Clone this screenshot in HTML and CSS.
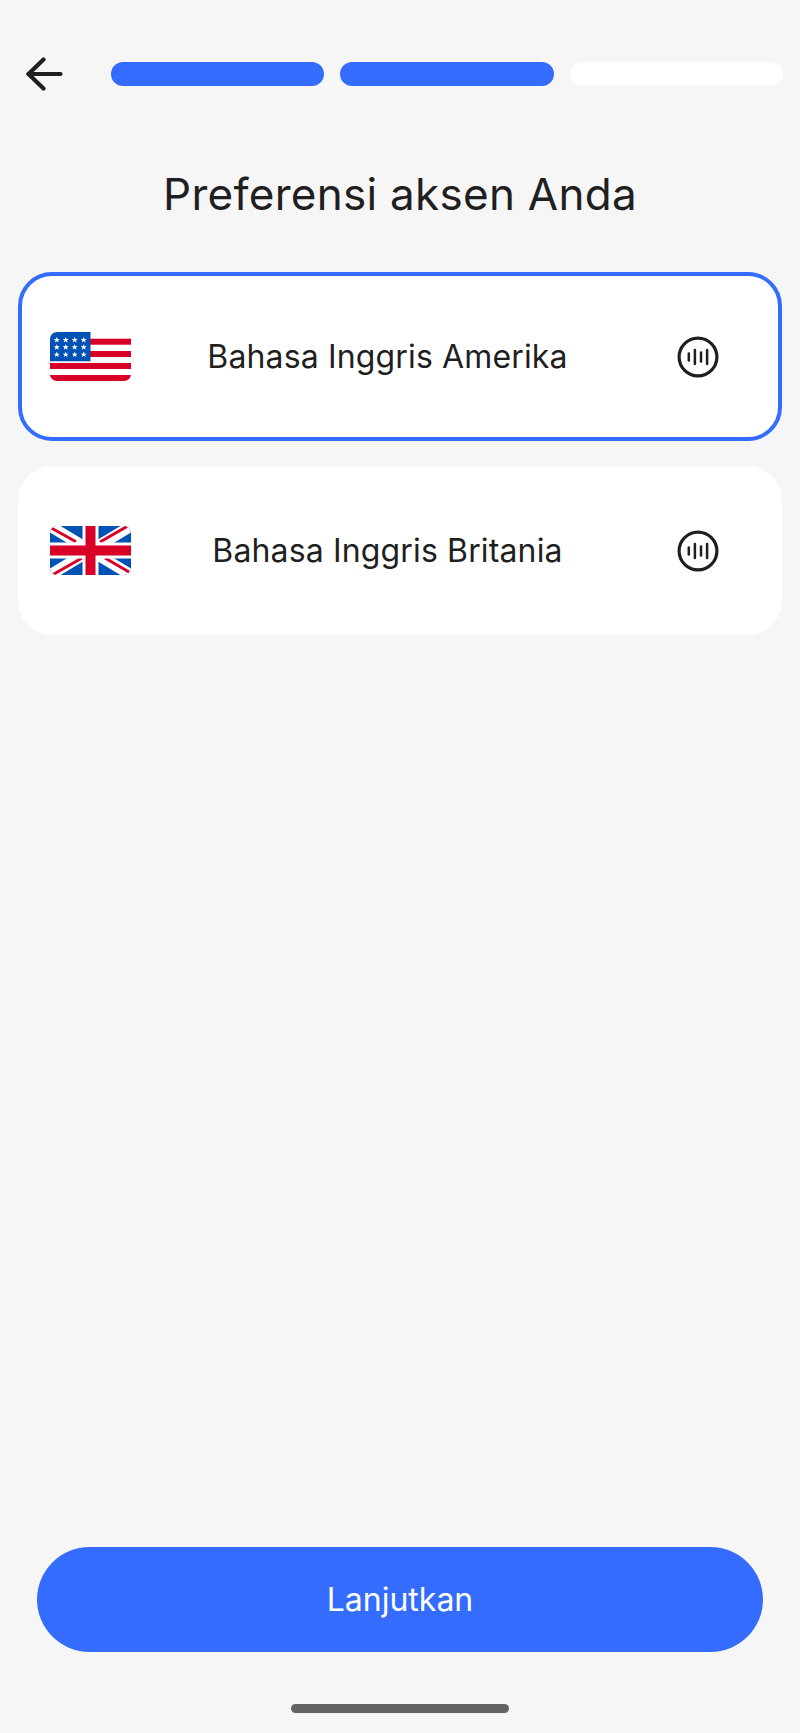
FILE: index.html
```html
<!DOCTYPE html>
<html>
  <head>
    <title>Preferensi aksen</title>
    <link rel="stylesheet" href="styles.css">
  </head>
  <body>
    <svg class="defs" width="0" height="0">
      <defs>
        <polygon id="star" points="0,-3 0.85,-0.95 3,-0.95 1.3,0.4 1.9,2.5 0,1.25 -1.9,2.5 -1.3,0.4 -3,-0.95 -0.85,-0.95"/>
        <symbol id="voice" viewBox="0 0 42 42">
          <circle cx="21" cy="21" r="18.9" fill="none" stroke="#1f1f1f" stroke-width="3.2"/>
          <g stroke="#1f1f1f" stroke-width="2.5" stroke-linecap="round">
            <line x1="11.8" y1="17.5" x2="11.8" y2="24.5"/>
            <line x1="17.9" y1="14" x2="17.9" y2="28"/>
            <line x1="24" y1="16.5" x2="24" y2="25.5"/>
            <line x1="30.1" y1="14" x2="30.1" y2="28"/>
          </g>
        </symbol>
      </defs>
    </svg>

    <div class="screen">
      <header class="topbar">
        <button class="back" aria-label="Kembali">
          <svg width="38" height="34" viewBox="0 0 38 34" fill="none" stroke="#1f1f1f" stroke-width="4.2" stroke-linecap="round" stroke-linejoin="round">
            <path d="M35.5 17H3.5"/>
            <path d="M18.5 2.5 3.5 17l15 14.5"/>
          </svg>
        </button>
        <div class="progress">
          <span class="step done"></span>
          <span class="step done"></span>
          <span class="step"></span>
        </div>
      </header>

      <h1 class="title">Preferensi aksen Anda</h1>

      <main class="options">
        <div class="option selected">
          <svg class="flag" width="81" height="49" viewBox="0 0 81 49">
            <defs>
              <clipPath id="usClip"><rect width="81" height="49" rx="7"/></clipPath>
            </defs>
            <g clip-path="url(#usClip)">
              <rect width="81" height="49" fill="#fff"/>
              <rect y="6.7" width="81" height="6" fill="#d80027"/>
              <rect y="19" width="81" height="6" fill="#d80027"/>
              <rect y="31" width="81" height="6" fill="#d80027"/>
              <rect y="43" width="81" height="6" fill="#d80027"/>
              <rect width="40.5" height="29.3" fill="#0052b4"/>
              <g fill="#fff">
                <use href="#star" x="6.8" y="8"/><use href="#star" x="15.7" y="8"/><use href="#star" x="24.7" y="8"/><use href="#star" x="33.7" y="8"/>
                <use href="#star" x="6.8" y="15.3"/><use href="#star" x="15.7" y="15.3"/><use href="#star" x="24.7" y="15.3"/><use href="#star" x="33.7" y="15.3"/>
                <use href="#star" x="6.8" y="22.6"/><use href="#star" x="15.7" y="22.6"/><use href="#star" x="24.7" y="22.6"/><use href="#star" x="33.7" y="22.6"/>
              </g>
            </g>
          </svg>
          <span class="label">Bahasa Inggris Amerika</span>
          <svg class="voice" width="42" height="42"><use href="#voice"/></svg>
        </div>

        <div class="option">
          <svg class="flag" width="81" height="49" viewBox="0 0 81 49">
            <defs>
              <clipPath id="ukClip"><rect width="81" height="49" rx="7"/></clipPath>
            </defs>
            <g clip-path="url(#ukClip)">
              <rect width="81" height="49" fill="#0052b4"/>
              <path d="M0 0 81 49M81 0 0 49" stroke="#fff" stroke-width="11"/>
              <path d="M1.7 2.3 26 15.7M55 32 79 46M50 16 77 0.5M3 48.5 32 32" stroke="#d80027" stroke-width="3"/>
              <path d="M40.5 0V49M0 24.5H81" stroke="#fff" stroke-width="16"/>
              <path d="M40.5 0V49M0 24.5H81" stroke="#d80027" stroke-width="10"/>
            </g>
          </svg>
          <span class="label">Bahasa Inggris Britania</span>
          <svg class="voice" width="42" height="42"><use href="#voice"/></svg>
        </div>
      </main>

      <footer class="bottom">
        <button class="continue">Lanjutkan</button>
        <div class="home-bar"></div>
      </footer>
    </div>
  </body>
</html>
```

FILE: styles.css
```css
body {
  font-family: Inter, "Noto Sans", sans-serif;
  margin: 0;
  padding: 0;
  background-color: #f6f6f6;
  color: #1f1f1f;
}

.defs {
  display: block;
  height: 0;
}

.screen {
  height: 1733px;
  display: flex;
  flex-direction: column;
  overflow: hidden;
}

.topbar {
  display: flex;
  align-items: center;
  padding: 57px 17px 0 25px;
}

.back {
  display: flex;
  width: 38px;
  height: 34px;
  padding: 0;
  border: none;
  background: none;
}

.progress {
  flex: 1;
  display: flex;
  gap: 16px;
  margin-left: 48px;
}

.step {
  flex: 1;
  height: 24px;
  border-radius: 12px;
  background-color: #fff;
}

.step.done {
  background-color: #336cff;
}

.title {
  margin: 75px 0 0;
  font-size: 44px;
  line-height: 56px;
  font-weight: 400;
  letter-spacing: 0.28px;
  text-align: center;
}

/* Accent list */
.options {
  display: flex;
  flex-direction: column;
  gap: 25px;
  margin-top: 50px;
  padding: 0 18px;
}

.option {
  box-sizing: border-box;
  height: 169px;
  display: flex;
  align-items: center;
  padding: 0 59px 0 28px;
  border-radius: 34px;
  border: 4px solid transparent;
  background-color: #fff;
}

.option.selected {
  border-color: #336cff;
}

.flag {
  flex: none;
}

.label {
  flex: 1;
  margin-right: 33px;
  font-size: 32px;
  letter-spacing: 0.14px;
  text-align: center;
}

.voice {
  flex: none;
}

/* Bottom button */
.bottom {
  margin-top: auto;
  display: flex;
  flex-direction: column;
  align-items: center;
  padding: 0 37px 20px;
}

.continue {
  width: 100%;
  height: 105px;
  border: none;
  border-radius: 53px;
  background-color: #336cff;
  color: #fff;
  font-family: inherit;
  font-size: 32px;
}

.home-bar {
  width: 218px;
  height: 9px;
  margin-top: 52px;
  border-radius: 5px;
  background-color: #636363;
}
```
